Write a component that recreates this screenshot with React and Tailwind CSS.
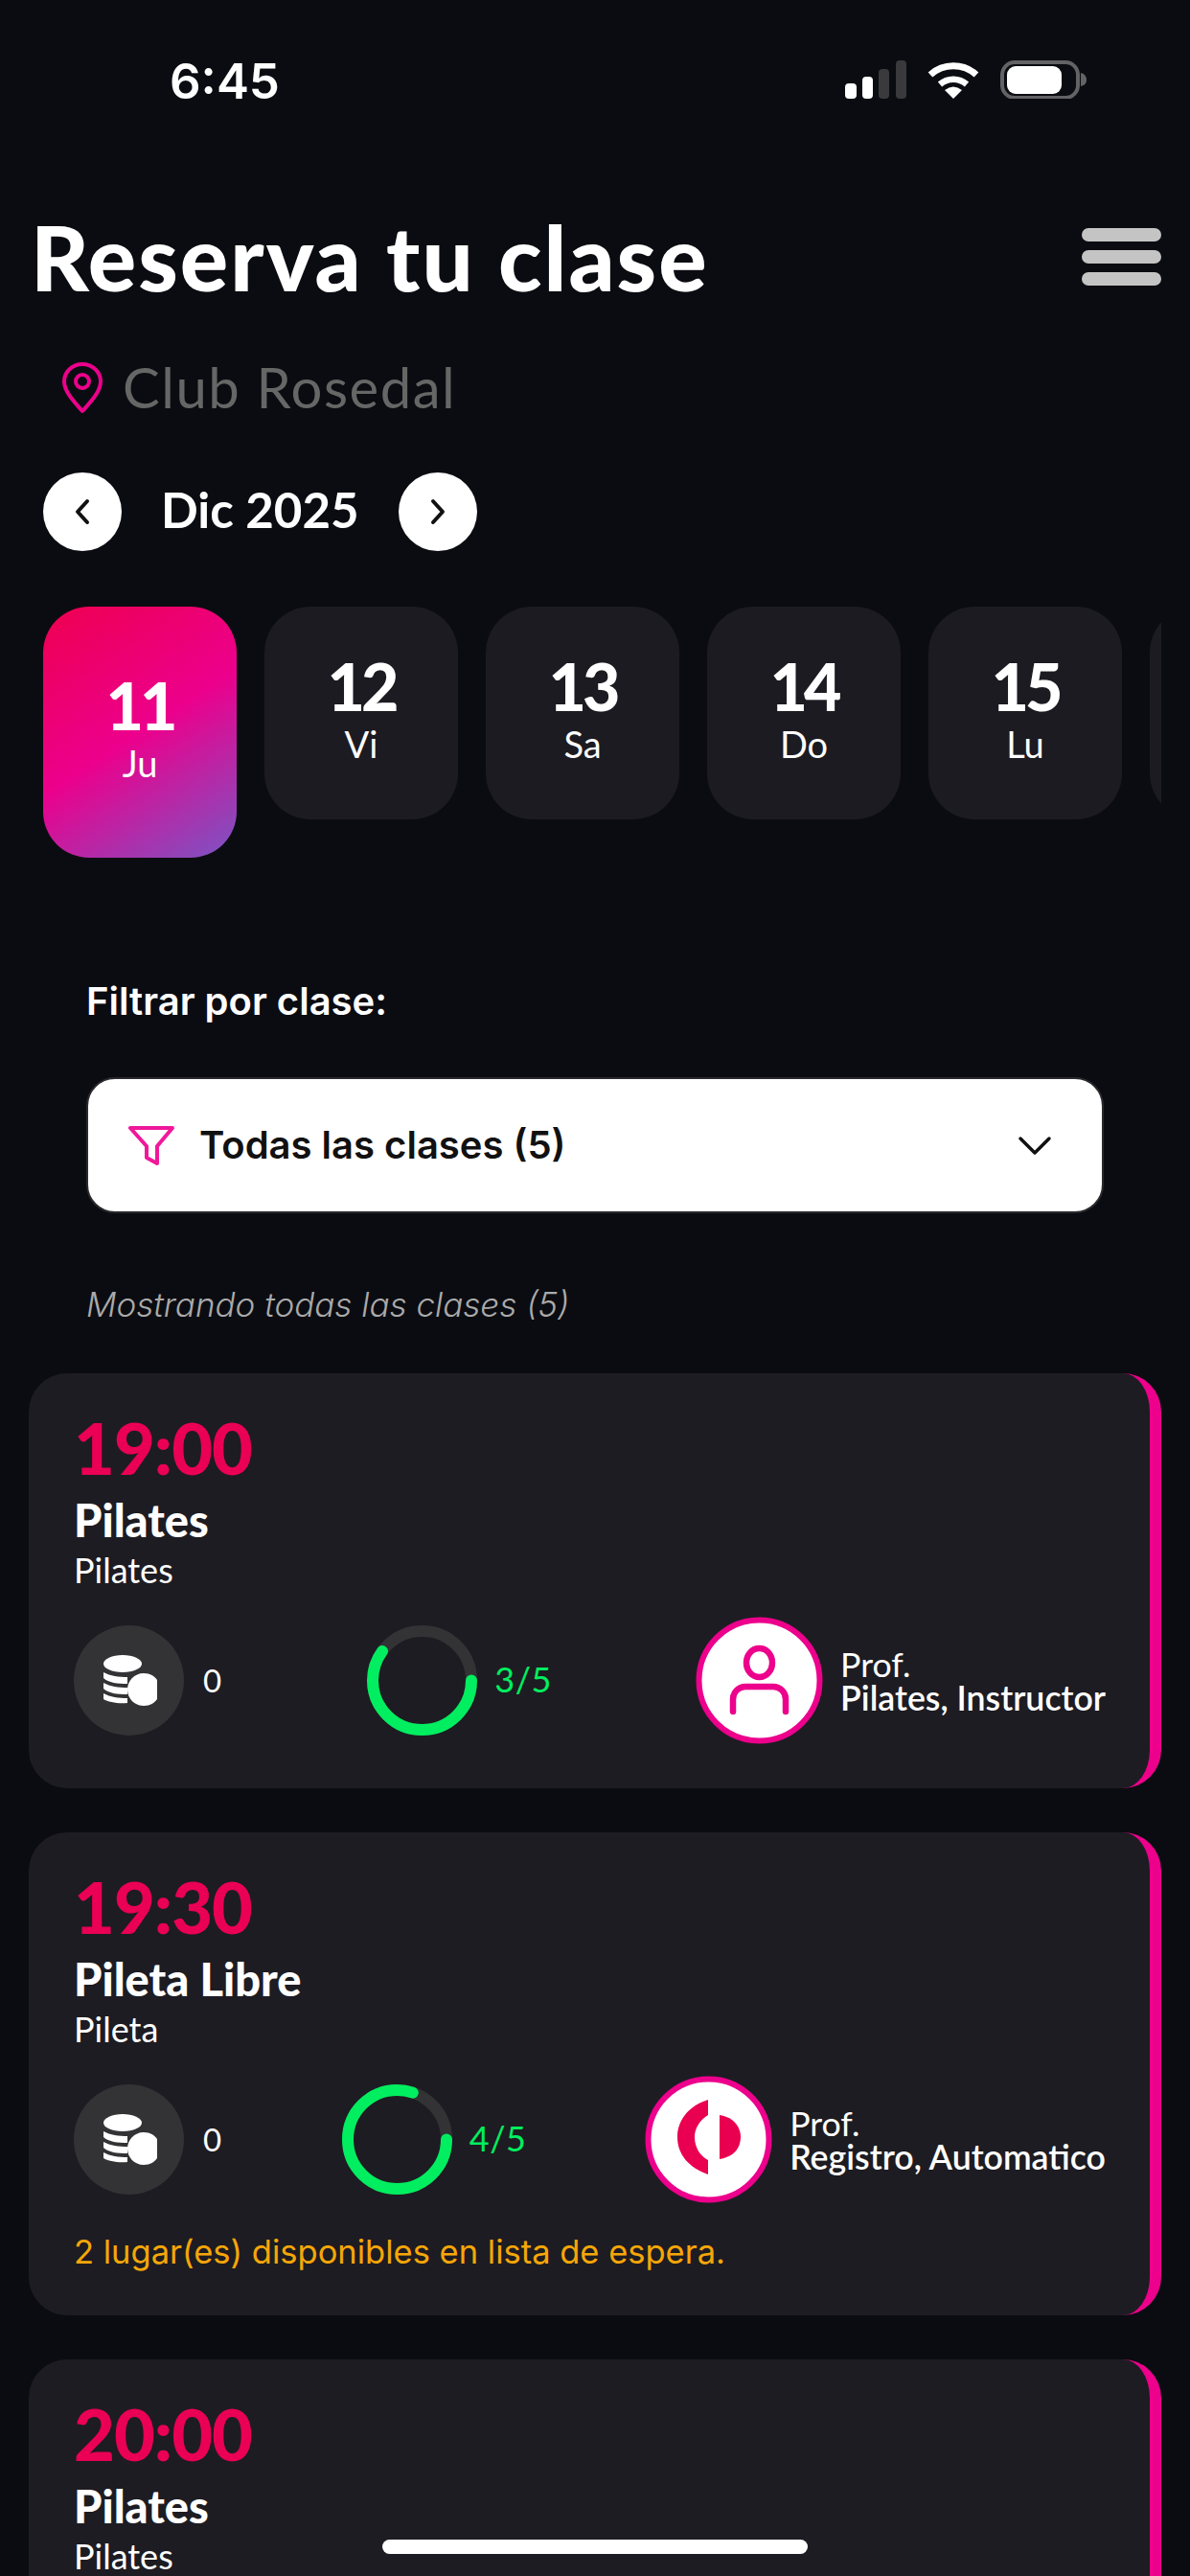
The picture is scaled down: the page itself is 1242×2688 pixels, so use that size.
import React from 'react';

const days = [
  { num: '12', name: 'Vi' },
  { num: '13', name: 'Sa' },
  { num: '14', name: 'Do' },
  { num: '15', name: 'Lu' },
];

const clases = [
  { hora: '19:00', titulo: 'Pilates', tipo: 'Pilates', ocupados: 3, prof: 'Pilates, Instructor', avatar: 'persona' },
  {
    hora: '19:30',
    titulo: 'Pileta Libre',
    tipo: 'Pileta',
    ocupados: 4,
    prof: 'Registro, Automatico',
    avatar: 'logo',
    nota: '2 lugar(es) disponibles en lista de espera.',
  },
  { hora: '20:00', titulo: 'Pilates', tipo: 'Pilates', ocupados: 3, prof: 'Pilates, Instructor', avatar: 'persona' },
];

const Signal = () => (
  <svg width="64" height="40" viewBox="0 0 64 40">
    <rect x="0" y="24" width="12" height="16" rx="4" fill="#fff" />
    <rect x="18" y="17" width="11" height="23" rx="4" fill="#fff" />
    <rect x="35" y="9" width="11" height="31" rx="4" fill="#3a3a3c" />
    <rect x="53" y="0" width="11" height="40" rx="4" fill="#3a3a3c" />
  </svg>
);

const Wifi = () => (
  <svg width="56" height="40" viewBox="0 0 56 40" fill="none" stroke="#fff">
    <path d="M4 15 A36 36 0 0 1 52 15" strokeWidth="7" />
    <path d="M14 25 A21 21 0 0 1 42 25" strokeWidth="6.5" />
    <path d="M19 31 Q28 24 37 31 L28 40 Z" fill="#fff" stroke="none" />
  </svg>
);

const Battery = () => (
  <svg width="90" height="40" viewBox="0 0 90 40">
    <rect x="2" y="2" width="79" height="37" rx="13" fill="none" stroke="#636366" strokeWidth="4" />
    <rect x="7" y="6" width="57" height="29" rx="9" fill="#fff" />
    <path d="M84 13 C88 14 90 17 90 20 C90 24 88 26 84 27 Z" fill="#636366" />
  </svg>
);

const Pin = () => (
  <svg width="44" height="54" viewBox="0 0 44 54" fill="none" stroke="#ec008c" strokeWidth="4">
    <path d="M22 51 C14 42 3 31 3 20 A19 18 0 0 1 41 20 C41 31 30 42 22 51 Z" strokeLinejoin="round" />
    <circle cx="22" cy="20" r="7" />
  </svg>
);

const Chevron = ({ dir }) => (
  <svg width="20" height="30" viewBox="0 0 20 30" fill="none" stroke="#111" strokeWidth="4" strokeLinecap="round" strokeLinejoin="round">
    <path d={dir === 'left' ? 'M15 4 L5 15 L15 26' : 'M5 4 L15 15 L5 26'} />
  </svg>
);

const Funnel = () => (
  <svg width="48" height="42" viewBox="0 0 48 42" fill="none" stroke="#f0189a" strokeWidth="4" strokeLinejoin="round">
    <path d="M2 3 H46 L30 22 V40 L19 34 V22 Z" />
  </svg>
);

const Coins = () => (
  <svg width="115" height="115" viewBox="0 0 115 115">
    <circle cx="57.5" cy="57.5" r="57.5" fill="#333335" />
    <ellipse cx="51" cy="40" rx="20" ry="9" fill="#fff" />
    <path d="M31 49 C38 53 47 54 56 54 V61 C46 61 36 60 31 55 Z" fill="#fff" />
    <path d="M31 60 C38 64 47 65 56 65 V72 C46 72 36 71 31 66 Z" fill="#fff" />
    <path d="M31 71 C38 75 47 76 56 76 V81 C46 82 36 80 31 77 Z" fill="#fff" />
    <path d="M73 50 C80 50 84 53 87 57 V77 C84 81 80 84 73 84 C63 84 56 76 56 67 C56 58 63 50 73 50 Z" fill="#fff" />
  </svg>
);

const Ring = ({ ocupados }) => {
  const r = 51.5;
  const c = 2 * Math.PI * r;
  return (
    <svg width="115" height="115" viewBox="0 0 115 115">
      <circle cx="57.5" cy="57.5" r={r} fill="none" stroke="#333335" strokeWidth="12" />
      <circle
        cx="57.5"
        cy="57.5"
        r={r}
        fill="none"
        stroke="#00ee5f"
        strokeWidth="12"
        strokeLinecap="round"
        strokeDasharray={`${(c * ocupados) / 5} ${c}`}
      />
    </svg>
  );
};

const Avatar = ({ tipo }) => (
  <svg width="133" height="133" viewBox="0 0 133 133" className="shrink-0">
    <circle cx="66.5" cy="66.5" r="63" fill="#fff" stroke="#ec008c" strokeWidth="6" />
    {tipo === 'persona' ? (
      <g fill="none" stroke="#ec008c" strokeWidth="6.5" strokeLinecap="round">
        <ellipse cx="66.5" cy="48" rx="13.5" ry="15" />
        <path d="M39 99 V86 A13 13 0 0 1 52 73 H81 A13 13 0 0 1 94 86 V99" />
      </g>
    ) : (
      <g fill="#ea0050">
        <path d="M66 25 C44 32 34 48 34 64 C34 82 46 96 66 103 V88 C58 84 52 75 52 64 C52 54 58 46 66 41 Z" />
        <path d="M78 41 C92 43 100 53 100 64 C100 76 92 85 78 87 Z" />
      </g>
    )}
  </svg>
);

const ClaseCard = ({ clase }) => (
  <div className="rounded-[40px] border-r-[12px] border-[#ec008c] bg-[#1d1c22] pt-[38px] pl-[47px] pr-[46px] pb-[46px]">
    <div className="h-[80px] font-['Lato',sans-serif] text-[74px] leading-[80px] font-black tracking-[-1px] text-[#ea0054]">{clase.hora}</div>
    <div className="mt-[10px] h-[50px] font-['Lato',sans-serif] text-[47px] leading-[50px] font-black text-white">{clase.titulo}</div>
    <div className="mt-[5px] h-[44px] font-['Lato',sans-serif] text-[36px] leading-[44px] text-white">{clase.tipo}</div>
    <div className="mt-[27px] flex items-center justify-between">
      <div className="flex items-center gap-[20px]">
        <Coins />
        <span className="w-[21px] font-['Lato',sans-serif] text-[33px] text-white">0</span>
      </div>
      <div className="flex items-center gap-[18px]">
        <Ring ocupados={clase.ocupados} />
        <span className="-mt-[4px] font-['Lato',sans-serif] text-[36px] tracking-[0.5px] text-[#00ee5f]">{clase.ocupados}/5</span>
      </div>
      <div className="flex items-center gap-[18px]">
        <Avatar tipo={clase.avatar} />
        <div className="font-['Lato',sans-serif] text-[35.7px] leading-[35px] text-white">
          <div>Prof.</div>
          <div className="font-semibold">{clase.prof}</div>
        </div>
      </div>
    </div>
    {clase.nota && <div className="mt-[31px] h-[40px] text-[34.5px] leading-[40px] text-[#f6a609]">{clase.nota}</div>}
  </div>
);

const App = () => {
  return (
    <div className="relative h-[2688px] w-[1242px] overflow-hidden bg-[#0b0c11] font-['Inter',sans-serif]">
      {/* barra de estado */}
      <div className="flex h-[170px] items-center justify-between pl-[177px] pr-[108px]">
        <span className="text-[51px] font-semibold text-white">6:45</span>
        <div className="flex items-center gap-[21px] pb-[4px]">
          <Signal />
          <Wifi />
          <Battery />
        </div>
      </div>

      <div className="flex h-[196px] items-center justify-between pl-[32px] pr-[30px]">
        <h1 className="pb-[2px] font-['Lato',sans-serif] text-[94px] font-black tracking-[2px] text-white">Reserva tu clase</h1>
        <div className="flex flex-col gap-[9px]">
          <div className="h-[14px] w-[83px] rounded-full bg-[#c4c4c4]" />
          <div className="h-[14px] w-[83px] rounded-full bg-[#c4c4c4]" />
          <div className="h-[14px] w-[83px] rounded-full bg-[#c4c4c4]" />
        </div>
      </div>

      <div className="flex h-[78px] items-center gap-[20px] pl-[64px]">
        <Pin />
        <span className="pb-[4px] font-['Lato',sans-serif] text-[58px] tracking-[1.5px] text-[#666666]">Club Rosedal</span>
      </div>

      <div className="mt-[49px] flex items-center pl-[45px]">
        <button className="flex size-[82px] items-center justify-center rounded-full bg-white">
          <Chevron dir="left" />
        </button>
        <span className="ml-[41px] w-[248px] pb-[4px] font-['Lato',sans-serif] text-[51px] font-bold text-white">Dic 2025</span>
        <button className="flex size-[82px] items-center justify-center rounded-full bg-white">
          <Chevron dir="right" />
        </button>
      </div>

      <div className="mt-[58px] mr-[30px] flex items-start gap-[29px] overflow-hidden pl-[45px]">
        <div className="flex h-[262px] w-[202px] shrink-0 flex-col items-center justify-center rounded-[48px] bg-[linear-gradient(147deg,#ee0050_0%,#ec008c_50%,#7a55c4_100%)] pb-[12px] text-white">
          <span className="font-['Lato',sans-serif] text-[68px] leading-[76px] font-black tracking-[-4px]">11</span>
          <span className="font-['Lato',sans-serif] text-[38px] leading-[44px]">Ju</span>
        </div>
        {days.map((d) => (
          <div key={d.num} className="flex h-[222px] w-[202px] shrink-0 flex-col items-center justify-center rounded-[48px] bg-[#1c1b21] pb-[12px] text-white">
            <span className="font-['Lato',sans-serif] text-[68px] leading-[76px] font-black tracking-[-4px]">{d.num}</span>
            <span className="font-['Lato',sans-serif] text-[38px] leading-[44px]">{d.name}</span>
          </div>
        ))}
        <div className="h-[222px] w-[202px] shrink-0 rounded-[48px] bg-[#1c1b21]" />
      </div>

      <div className="px-[90px]">
        <div className="mt-[125px] h-[50px] text-[40px] leading-[50px] font-semibold text-white">Filtrar por clase:</div>
        <div className="mt-[54px] flex h-[142px] items-center rounded-[30px] border-2 border-[#2a2a2e] bg-white pl-[42px] pr-[52px]">
          <Funnel />
          <span className="ml-[26px] flex-1 text-[40px] font-semibold text-[#111111]">Todas las clases (5)</span>
          <svg width="36" height="24" viewBox="0 0 36 24" fill="none" stroke="#111" strokeWidth="3.5" strokeLinecap="round" strokeLinejoin="round">
            <path d="M3 5 L18 20 L33 5" />
          </svg>
        </div>
        <div className="mt-[72px] h-[46px] text-[35px] leading-[46px] font-light text-[#aaaaaa] italic">Mostrando todas las clases (5)</div>
      </div>

      <div className="mt-[49px] flex flex-col gap-[46px] px-[30px]">
        {clases.map((clase, i) => (
          <ClaseCard key={i} clase={clase} />
        ))}
      </div>

      {/* indicador de inicio */}
      <div className="absolute bottom-[23px] left-[399px] h-[15px] w-[444px] rounded-full bg-white" />
    </div>
  );
};

export default App;
